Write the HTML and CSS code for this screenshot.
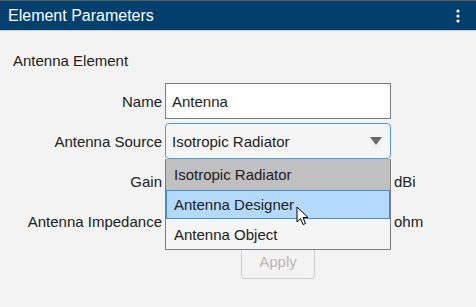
FILE: index.html
```html
<html>
    <head>
        <link rel="stylesheet" href="styles.css">
    </head>
<body>
    <div class="header">
        <span class="title">Element Parameters</span>
        <svg class="kebab" width="6" height="16" viewBox="0 0 6 16">
            <circle cx="3" cy="3" r="1.6" fill="#fff"/>
            <circle cx="3" cy="8" r="1.6" fill="#fff"/>
            <circle cx="3" cy="13" r="1.6" fill="#fff"/>
        </svg>
    </div>

    <div class="panel">
        <div class="section">Antenna Element</div>

        <div class="form">
            <label>Name</label>
            <div class="field">Antenna</div>
            <span></span>

            <label>Antenna Source</label>
            <div class="field select">
                Isotropic Radiator
                <svg class="arrow" width="12" height="8" viewBox="0 0 12 8">
                    <polygon points="0,0 12,0 6,8" fill="#6b6b6b"/>
                </svg>
            </div>
            <span></span>

            <label>Gain</label>
            <div class="field"></div>
            <span class="unit">dBi</span>

            <label>Antenna Impedance</label>
            <div class="field"></div>
            <span class="unit">ohm</span>

            <span></span>
            <div class="btnCell"><button class="applyBtn">Apply</button></div>
            <span></span>
        </div>

        <div class="menu">
            <div class="item sel">Isotropic Radiator</div>
            <div class="item hover">Antenna Designer</div>
            <div class="item">Antenna Object</div>
        </div>

        <svg class="cursor" width="14" height="20" viewBox="0 0 14 20">
            <path d="M1 1 L1 16 L4.5 12.5 L7 18.5 L9.5 17.5 L7 11.5 L12 11.5 Z" fill="#fff" stroke="#000" stroke-width="1" stroke-linejoin="round"/>
        </svg>
    </div>
</body>
</html>
```

FILE: styles.css
```css
* {
    font-family: "Liberation Sans", Arial, sans-serif;
    box-sizing: border-box;
}
body {
    margin: 0;
    background: #f3f3f3;
    width: 476px;
    height: 307px;
    overflow: hidden;
}

.header {
    height: 31px;
    background: #00406f;
    border-top: 1px solid #5c5c5c;
    border-bottom: 1px solid #d2d2d2;
    display: flex;
    align-items: center;
    justify-content: space-between;
    padding: 0 15px 0 8px;
}
.title {
    color: #fff;
    font-size: 16px;
}

.panel {
    position: relative;
    height: 276px;
}
.section {
    font-size: 15px;
    color: #212121;
    padding: 21px 0 0 13px;
    height: 52px;
}

.form {
    display: grid;
    grid-template-columns: 165px 226px 1fr;
    grid-auto-rows: 36px;
    row-gap: 4px;
    font-size: 15px;
    color: #212121;
}
.form label {
    text-align: right;
    padding-right: 3px;
    align-self: center;
}
.field {
    background: #fff;
    border: 1px solid #7d7d7d;
    padding-left: 6px;
    display: flex;
    align-items: center;
}
.select {
    background: #f5f5f5;
    border: 1px solid #4a9be0;
    border-radius: 4px;
    justify-content: space-between;
    padding-right: 8px;
}
.unit {
    padding-left: 3px;
    align-self: center;
}
.btnCell {
    display: flex;
    justify-content: center;
}
.applyBtn {
    width: 74px;
    height: 36px;
    background: #f3f3f3;
    border: 1px solid #cccccc;
    border-radius: 4px;
    color: #b8b8b8;
    font-size: 15px;
}

.menu {
    position: absolute;
    left: 165px;
    top: 128px;
    width: 226px;
    background: #f5f5f5;
    border: 1px solid #7d7d7d;
    border-top: none;
    font-size: 15px;
    color: #212121;
}
.item {
    height: 30px;
    padding-left: 7px;
    display: flex;
    align-items: center;
    border: 1px solid transparent;
}
.item.sel {
    background: #c0c0c0;
    height: 31px;
    border-color: #c0c0c0;
}
.item.hover {
    background: #b3dafa;
    border-color: #3b8fe0;
    height: 29px;
}

.cursor {
    position: absolute;
    left: 296px;
    top: 175px;
}
```
